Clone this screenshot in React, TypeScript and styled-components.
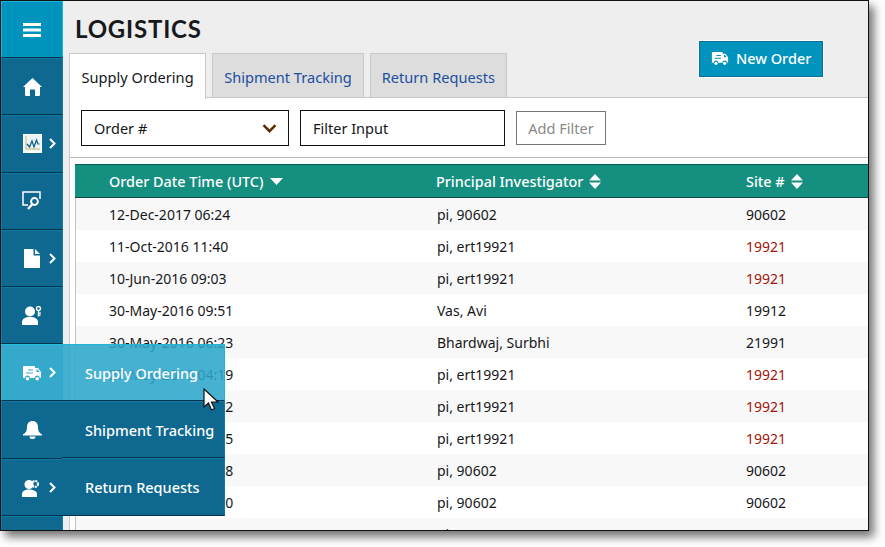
import React from 'react'
import styled, { createGlobalStyle } from 'styled-components'

const Global = createGlobalStyle`
  html, body { margin: 0; padding: 0; background: #fff; }
  body { width: 885px; height: 547px; overflow: hidden; font-family: "Noto Sans", "Open Sans", sans-serif; }
  * { box-sizing: border-box; }
`

const Window = styled.div`
  position: relative;
  display: flex;
  width: 869px;
  height: 531px;
  border: 1px solid #111;
  background: #eee;
  overflow: hidden;
`
const Frame = styled.div`
  width: 869px;
  height: 531px;
  box-shadow: 5px 6px 9px rgba(0, 0, 0, 0.55);
`
const Sidebar = styled.nav`
  flex: none;
  width: 62px;
  background: #0e6890;
`
const NavItem = styled.div<{ $tone?: 'top' | 'active' }>`
  display: flex;
  align-items: center;
  height: 57.2px;
  padding-left: 20px;
  color: #fff;
  background: ${p => (p.$tone === 'top' ? '#0093bd' : p.$tone === 'active' ? '#35a9cb' : '#0e6890')};
  border: 1px solid ${p => (p.$tone === 'top' ? '#19b4d6' : p.$tone === 'active' ? '#1fc0e0' : '#0f7aa3')};
  border-bottom-color: #06344c;
`
const IconSlot = styled.span`
  display: flex;
  justify-content: center;
  flex: none;
  width: 20px;
`
const Chevron = styled.span`
  display: flex;
  margin-left: 7px;
`
const Main = styled.main`
  flex: 1;
  min-width: 0;
  display: flex;
  flex-direction: column;
  padding-left: 6px;
`
const Top = styled.header`
  position: relative;
  display: flex;
  justify-content: space-between;
  height: 96px;
  flex: none;
`
const TitleBlock = styled.div`
  display: flex;
  flex-direction: column;
`
const Title = styled.h1`
  flex: none;
  margin: 16px 0 0 6px;
  height: 36px;
  font: 700 24px/24px Lato, sans-serif;
  letter-spacing: 0.8px;
  color: #17191c;
`
const Tabs = styled.div`
  flex: none;
  display: flex;
  gap: 6px;
`
const Tab = styled.div<{ $active?: boolean }>`
  height: ${p => (p.$active ? 46 : 45)}px;
  padding: 0 ${p => (p.$active ? 11.5 : 11)}px;
  font-size: 14.6px;
  line-height: 46px;
  white-space: nowrap;
  color: ${p => (p.$active ? '#15171a' : '#1c4f9e')};
  background: ${p => (p.$active ? '#fff' : '#ddd')};
  border: 1px solid #c8c8c8;
  border-bottom: ${p => (p.$active ? 'none' : '1px solid #c8c8c8')};
  position: relative;
  z-index: 1;
`
const NewOrder = styled.button`
  display: flex;
  align-items: center;
  gap: 7px;
  width: 124px;
  height: 36px;
  margin: 40px 45px 0 0;
  padding: 0 0 2px 11px;
  font: 500 14.5px "Noto Sans", sans-serif;
  color: #fff;
  background: #0093bd;
  border: 1px solid #0c6f93;
  outline: 1px solid #fff;
`
const Panel = styled.section`
  flex: 1;
  min-height: 0;
  background: #fff;
  border-left: 1px solid #c8c8c8;
  border-top: 1px solid #c8c8c8;
`
const Filters = styled.div`
  display: flex;
  align-items: center;
  height: 60px;
  padding: 1px 0 0 11px;
  border-bottom: 1px solid #bbb;
`
const Picker = styled.div`
  display: flex;
  align-items: center;
  justify-content: space-between;
  width: 208px;
  height: 36px;
  padding: 0 11px 0 12px;
  font-size: 14.5px;
  color: #15171a;
  border: 1px solid #111;
`
const FilterInput = styled.input`
  width: 205px;
  height: 36px;
  margin-left: 11px;
  padding: 0 12px;
  font: 14.5px "Noto Sans", sans-serif;
  border: 1px solid #111;
  outline: none;
  &::placeholder { color: #15171a; opacity: 1; }
`
const AddFilter = styled.button`
  width: 90px;
  height: 34px;
  margin-left: 11px;
  padding: 0;
  font: 14.5px "Noto Sans", sans-serif;
  color: #8a8a8a;
  background: #fff;
  border: 1px solid #777;
`
const Table = styled.div`
  margin: 6px 0 0 5px;
  border-left: 1px solid #c4c4c4;
`
const Cols = styled.div`
  display: grid;
  grid-template-columns: 361px 310px 1fr;
  align-items: center;
`
const Head = styled(Cols)`
  height: 34px;
  margin-left: -1px;
  font-size: 14.4px;
  font-weight: 500;
  color: #fff;
  background: #158f7f;
  border-top: 1px solid #0b5a50;
  border-bottom: 1px solid #0b4a42;
`
const HeadCell = styled.div`
  display: flex;
  align-items: center;
  gap: 6px;
  white-space: nowrap;
  &:first-child { padding-left: 34px; }
`
const Row = styled(Cols)`
  grid-template-columns: 361px 309px 1fr;
  height: 32px;
  font-size: 14px;
  color: #15171a;
  &:nth-child(odd) { background: #f8f8f8; }
  &:nth-child(even) { background: #fff; }
`
const Cell = styled.div<{ $flag?: boolean }>`
  white-space: nowrap;
  color: ${p => (p.$flag ? '#a01408' : 'inherit')};
  &:first-child { padding-left: 33px; }
`
const Flyout = styled.div`
  position: absolute;
  left: 61px;
  top: 343px;
  width: 163px;
  z-index: 5;
`
const FlyItem = styled.div<{ $active?: boolean }>`
  display: flex;
  align-items: center;
  height: 57.2px;
  padding-left: 23px;
  font-size: 14.5px;
  font-weight: 500;
  color: #fff;
  background: ${p => (p.$active ? 'rgba(46, 166, 203, 0.88)' : '#0e6890')};
  border: 1px solid ${p => (p.$active ? '#1fb4d6' : '#0f7aa3')};
  border-left: none;
  border-bottom-color: #06344c;
`
const Cursor = styled.svg`
  position: absolute;
  left: 203px;
  top: 388px;
  z-index: 6;
`

const TruckIcon = ({ size = 20 }: { size?: number }) => (
  <svg width={size} height={size * 0.8} viewBox="0 0 20 16" fill="currentColor">
    <path
      fillRule="evenodd"
      d="M2 1h10a1 1 0 0 1 1 1v1h3l3 4v5a1 1 0 0 1-1 1h-.3a2.5 2.5 0 0 0-5 0H8a2.5 2.5 0 0 0-5 0H2a1 1 0 0 1-1-1V2a1 1 0 0 1 1-1zM14.5 4.5V7h3l-1.8-2.5zM6 4.5h5v1H6zM4 7.5h7v1H4z"
    />
    <circle cx="5.5" cy="13.7" r="1.8" />
    <circle cx="15.2" cy="13.7" r="1.8" />
  </svg>
)
const MenuIcon = () => (
  <svg width="18" height="14" viewBox="0 0 18 14" fill="currentColor">
    <path d="M0 0h18v3H0zM0 5.5h18v3H0zM0 11h18v3H0z" />
  </svg>
)
const HomeIcon = () => (
  <svg width="19" height="18" viewBox="0 0 19 18" fill="currentColor">
    <path fillRule="evenodd" d="M9.5 0L19 9h-2v8a1 1 0 0 1-1 1h-4v-6.5H7V18H3a1 1 0 0 1-1-1V9H0z" />
  </svg>
)
const ChartIcon = () => (
  <svg width="19" height="19" viewBox="0 0 19 19" fill="none">
    <rect x="0.5" y="0.5" width="18" height="17" fill="#eaf3f7" stroke="#fff" />
    <path d="M3 2v13h14" stroke="#c9a94c" strokeWidth="0.8" />
    <path d="M4 10l2.5 3 2.5-6 2 6 2.5-7 1.5 4h1.5" stroke="#0c5d84" strokeWidth="1.2" />
    <path d="M0 18.5h19" stroke="#fff" />
  </svg>
)
const SearchScreenIcon = () => (
  <svg width="20" height="20" viewBox="0 0 20 20" fill="none" stroke="currentColor">
    <path d="M6 14H1V1h17v7" strokeWidth="1.5" />
    <circle cx="12.5" cy="10.5" r="3.4" strokeWidth="2" />
    <path d="M10 13.5l-4 4.5" strokeWidth="2.4" />
  </svg>
)
const PageIcon = () => (
  <svg width="16" height="19" viewBox="0 0 16 19" fill="currentColor">
    <path fillRule="evenodd" d="M0 0h9.5v6.5H16V19H0z" />
    <path d="M11 0l5 5h-5z" />
  </svg>
)
const UserKeyIcon = () => (
  <svg width="20" height="19" viewBox="0 0 20 19" fill="currentColor">
    <circle cx="8" cy="5.5" r="5" />
    <path d="M0 19v-3c0-3 3-5 8-5s8 2 8 5v3z" />
    <circle cx="16.5" cy="2.5" r="2" fill="none" stroke="currentColor" strokeWidth="1.4" />
    <path d="M15.8 4h1.4v6.5h-1.4zM17 6.5h2v1.2h-2zM17 8.6h1.6v1.2H17z" />
  </svg>
)
const BellIcon = () => (
  <svg width="19" height="18" viewBox="0 0 19 18" fill="currentColor">
    <path d="M9.5 0C13 0 15 2.6 15 6c0 4 1.2 6 4 7.3V14.5H0v-1.2C2.8 12 4 10 4 6c0-3.4 2-6 5.5-6z" />
    <path d="M6.5 15.5h6a3 2.5 0 0 1-6 0z" />
  </svg>
)
const UserGearIcon = () => (
  <svg width="20" height="19" viewBox="0 0 20 19" fill="currentColor">
    <circle cx="7" cy="6.5" r="4.5" />
    <path d="M0 19v-3c0-3 3-4.500 7-4.500s8 1.500 8 4.500v3z" />
    <circle cx="13" cy="6" r="3" fill="none" stroke="currentColor" strokeWidth="2.2" strokeDasharray="2 0.8" />
  </svg>
)
const ChevronIcon = () => (
  <svg width="7" height="11" viewBox="0 0 7 11" fill="none" stroke="currentColor" strokeWidth="2">
    <path d="M1 1l4.500 4.500L1 10" />
  </svg>
)
const DownIcon = () => (
  <svg width="15" height="9" viewBox="0 0 15 9" fill="none" stroke="#5a2a00" strokeWidth="2.4">
    <path d="M1.500 1.200l6 6 6-6" />
  </svg>
)
const SortDown = () => (
  <svg width="13" height="7" viewBox="0 0 13 7" fill="#fff">
    <path d="M0 0h13L6.500 7z" />
  </svg>
)
const SortBoth = () => (
  <svg width="12" height="15" viewBox="0 0 12 15" fill="#fff">
    <path d="M6 0l6 6.500H0zM0 8.500h12L6 15z" />
  </svg>
)

const rows: [string, string, string][] = [
  ['12-Dec-2017 06:24', 'pi, 90602', '90602'],
  ['11-Oct-2016 11:40', 'pi, ert19921', '19921'],
  ['10-Jun-2016 09:03', 'pi, ert19921', '19921'],
  ['30-May-2016 09:51', 'Vas, Avi', '19912'],
  ['30-May-2016 06:23', 'Bhardwaj, Surbhi', '21991'],
  ['27-May-2016 04:19', 'pi, ert19921', '19921'],
  ['27-May-2016 04:12', 'pi, ert19921', '19921'],
  ['27-May-2016 04:05', 'pi, ert19921', '19921'],
  ['26-May-2016 11:28', 'pi, 90602', '90602'],
  ['26-May-2016 11:20', 'pi, 90602', '90602'],
  ['26-May-2016 11:04', 'pi, 90602', '90602'],
]

const nav = [
  { icon: <HomeIcon /> },
  { icon: <ChartIcon />, more: true },
  { icon: <SearchScreenIcon /> },
  { icon: <PageIcon />, more: true },
  { icon: <UserKeyIcon /> },
  { icon: <TruckIcon />, more: true, active: true },
  { icon: <BellIcon /> },
  { icon: <UserGearIcon />, more: true },
  { icon: null },
]

export default function App() {
  return (
    <>
      <Global />
      <Frame>
        <Window>
          <Sidebar>
            <NavItem $tone="top">
              <IconSlot>
                <MenuIcon />
              </IconSlot>
            </NavItem>
            {nav.map((item, i) => (
              <NavItem key={i} $tone={item.active ? 'active' : undefined}>
                <IconSlot>{item.icon}</IconSlot>
                {item.more && (
                  <Chevron>
                    <ChevronIcon />
                  </Chevron>
                )}
              </NavItem>
            ))}
          </Sidebar>
          <Main>
            <Top>
              <TitleBlock>
                <Title>LOGISTICS</Title>
                <Tabs>
                  <Tab $active>Supply Ordering</Tab>
                  <Tab>Shipment Tracking</Tab>
                  <Tab>Return Requests</Tab>
                </Tabs>
              </TitleBlock>
              <NewOrder>
                <TruckIcon size={18} />
                New Order
              </NewOrder>
            </Top>
            <Panel>
              <Filters>
                <Picker>
                  Order #
                  <DownIcon />
                </Picker>
                <FilterInput placeholder="Filter Input" />
                <AddFilter>Add Filter</AddFilter>
              </Filters>
              <Table>
                <Head>
                  <HeadCell>
                    Order Date Time (UTC) <SortDown />
                  </HeadCell>
                  <HeadCell>
                    Principal Investigator <SortBoth />
                  </HeadCell>
                  <HeadCell>
                    Site # <SortBoth />
                  </HeadCell>
                </Head>
                <div>
                  {rows.map(r => (
                    <Row key={r[0]}>
                      <Cell>{r[0]}</Cell>
                      <Cell>{r[1]}</Cell>
                      <Cell $flag={r[2] === '19921'}>{r[2]}</Cell>
                    </Row>
                  ))}
                </div>
              </Table>
            </Panel>
          </Main>
          <Flyout>
            <FlyItem $active>Supply Ordering</FlyItem>
            <FlyItem>Shipment Tracking</FlyItem>
            <FlyItem>Return Requests</FlyItem>
          </Flyout>
        </Window>
      </Frame>
      <Cursor width="16" height="24" viewBox="0 0 16 24">
        <path d="M1 1v18l4.500-4 3 7 3-1.500-3-6.500H15z" fill="#fff" stroke="#111" strokeWidth="1.200" />
      </Cursor>
    </>
  )
}
